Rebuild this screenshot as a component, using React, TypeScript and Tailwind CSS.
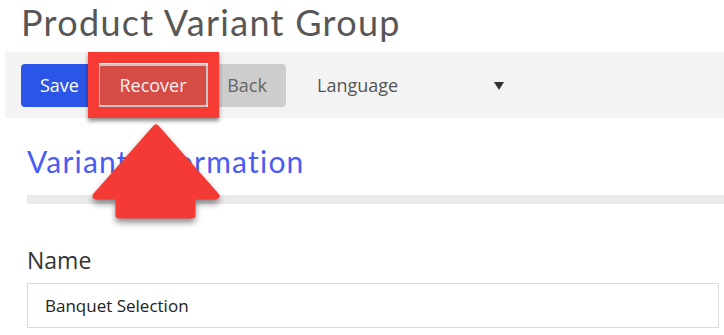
export default function App() {
  return (
    <div className="relative h-[335px] w-[724px] overflow-hidden bg-white font-['Open_Sans',sans-serif]">
      <h1 className="pl-[21px] font-['Lato',sans-serif] text-[36px] leading-[44px] tracking-[1.3px] text-[#575757]">
        Product Variant Group
      </h1>

      {/* toolbar */}
      <div className="ml-[5px] mt-[8px] flex h-[66px] items-start bg-[#f3f3f3] pl-[16px] pt-[12px]">
        <button className="flex h-[43px] w-[77px] items-center justify-center rounded-l-[4px] bg-[#2b55e6] text-[18px] text-white">
          Save
        </button>
        <button className="flex h-[43px] w-[110px] items-center justify-center rounded-[3px] border-2 border-[#c6c6c6] bg-[#d54b45] text-[18px] text-[#fdf0f0]">
          Recover
        </button>
        <button className="flex h-[43px] w-[78px] items-center justify-center rounded-r-[4px] bg-[#cdcdcd] text-[18px] text-[#666]">
          Back
        </button>
        <div className="ml-[31px] flex h-[43px] items-center text-[18px] text-[#555]">
          <span>Language</span>
          <svg className="ml-[96px]" width="10" height="8" viewBox="0 0 10 8">
            <polygon points="0,0 10,0 5,8" fill="#333" />
          </svg>
        </div>
      </div>

      {/* form section */}
      <div className="pl-[27px]">
        <h2 className="mt-[25px] font-['Lato',sans-serif] text-[30px] leading-[36px] tracking-[1.2px] text-[#4b5cf3]">
          Variant Information
        </h2>
        <div className="mt-[16px] h-[9px] bg-[#eaeaea]" />
        <label className="mt-[42px] block text-[23px] leading-[28px] text-[#333]">Name</label>
        <div className="mt-[9px] flex h-[45px] w-[692px] items-center border border-[#dcdcdc] pl-[17px] text-[17px] text-[#222]">
          Banquet Selection
        </div>
      </div>

      {/* annotation overlay */}
      <div className="absolute left-[88px] top-[52px] h-[66px] w-[131px] border-[11px] border-[#f53b34] shadow-[0_3px_4px_rgba(0,0,0,0.45)]" />
      <svg
        className="absolute left-[80px] top-[112px] drop-shadow-[0_4px_3px_rgba(0,0,0,0.45)]"
        width="160"
        height="120"
        viewBox="0 0 160 120"
      >
        <polygon
          points="76,16 136,84 112,84 112,103 39,103 39,84 16,84"
          fill="#f43a35"
          stroke="#f43a35"
          strokeWidth="7"
          strokeLinejoin="round"
        />
      </svg>
    </div>
  );
}
